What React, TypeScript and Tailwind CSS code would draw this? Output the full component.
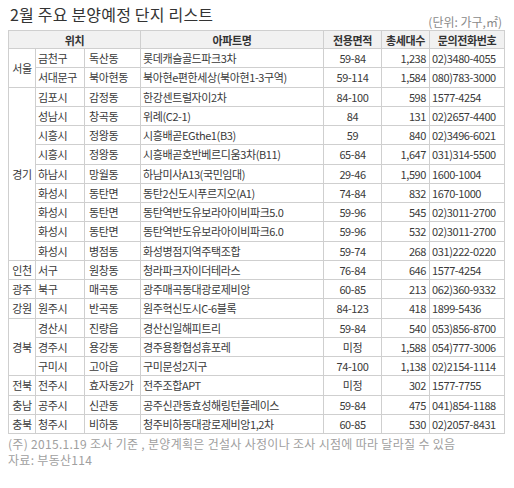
const font = { fontFamily: '"Noto Sans CJK KR", "Noto Sans", sans-serif' };

type Row = {
  region?: string;
  span?: number;
  city: string;
  dong: string;
  name: string;
  area: string;
  units: string;
  phone: string;
};

const rows: Row[] = [
  { region: "서울", span: 2, city: "금천구", dong: "독산동", name: "롯데캐슬골드파크3차", area: "59-84", units: "1,238", phone: "02)3480-4055" },
  { city: "서대문구", dong: "북아현동", name: "북아현e편한세상(북아현1-3구역)", area: "59-114", units: "1,584", phone: "080)783-3000" },
  { region: "경기", span: 9, city: "김포시", dong: "감정동", name: "한강센트럴자이2차", area: "84-100", units: "598", phone: "1577-4254" },
  { city: "성남시", dong: "창곡동", name: "위례(C2-1)", area: "84", units: "131", phone: "02)2657-4400" },
  { city: "시흥시", dong: "정왕동", name: "시흥배곧EGthe1(B3)", area: "59", units: "840", phone: "02)3496-6021" },
  { city: "시흥시", dong: "정왕동", name: "시흥배곧호반베르디움3차(B11)", area: "65-84", units: "1,647", phone: "031)314-5500" },
  { city: "하남시", dong: "망월동", name: "하남미사A13(국민임대)", area: "29-46", units: "1,590", phone: "1600-1004" },
  { city: "화성시", dong: "동탄면", name: "동탄2신도시푸르지오(A1)", area: "74-84", units: "832", phone: "1670-1000" },
  { city: "화성시", dong: "동탄면", name: "동탄역반도유보라아이비파크5.0", area: "59-96", units: "545", phone: "02)3011-2700" },
  { city: "화성시", dong: "동탄면", name: "동탄역반도유보라아이비파크6.0", area: "59-96", units: "532", phone: "02)3011-2700" },
  { city: "화성시", dong: "병점동", name: "화성병점지역주택조합", area: "59-74", units: "268", phone: "031)222-0220" },
  { region: "인천", span: 1, city: "서구", dong: "원창동", name: "청라파크자이더테라스", area: "76-84", units: "646", phone: "1577-4254" },
  { region: "광주", span: 1, city: "북구", dong: "매곡동", name: "광주매곡동대광로제비앙", area: "60-85", units: "213", phone: "062)360-9332" },
  { region: "강원", span: 1, city: "원주시", dong: "반곡동", name: "원주혁신도시C-6블록", area: "84-123", units: "418", phone: "1899-5436" },
  { region: "경북", span: 3, city: "경산시", dong: "진량읍", name: "경산신일해피트리", area: "59-84", units: "540", phone: "053)856-8700" },
  { city: "경주시", dong: "용강동", name: "경주용황협성휴포레", area: "미정", units: "1,588", phone: "054)777-3006" },
  { city: "구미시", dong: "고아읍", name: "구미문성2지구", area: "74-100", units: "1,138", phone: "02)2154-1114" },
  { region: "전북", span: 1, city: "전주시", dong: "효자동2가", name: "전주조합APT", area: "미정", units: "302", phone: "1577-7755" },
  { region: "충남", span: 1, city: "공주시", dong: "신관동", name: "공주신관동효성해링턴플레이스", area: "59-84", units: "475", phone: "041)854-1188" },
  { region: "충북", span: 1, city: "청주시", dong: "비하동", name: "청주비하동대광로제비앙1,2차", area: "60-85", units: "530", phone: "02)2057-8431" },
];

const td = "border border-[#cfcfcf] p-0 whitespace-nowrap overflow-hidden";

export default function App() {
  return (
    <div
      className="w-[514px] h-[488px] bg-white px-[8px] text-[#3a3a3a]"
      style={font}
    >
      <div className="h-[30px] flex justify-between">
        <div className="text-[16px] leading-[20px] mt-[4px] pl-[2px] text-[#333] tracking-[0.2px]">
          2월 주요 분양예정 단지 리스트
        </div>
        <div className="self-end text-[12px] leading-[15px] mb-[1px] mr-[4px] text-[#8a8a8a]">
          (단위: 가구,㎡)
        </div>
      </div>
      <table className="table-fixed border-collapse w-[496px] text-[11px] leading-[14px] tracking-[-0.4px]">
        <colgroup>
          <col className="w-[27px]" />
          <col className="w-[49px]" />
          <col className="w-[56px]" />
          <col className="w-[183px]" />
          <col className="w-[58px]" />
          <col className="w-[48px]" />
          <col className="w-[75px]" />
        </colgroup>
        <thead>
          <tr className="h-[18px] bg-[#f1f1f1] font-bold text-[#333]">
            <th colSpan={3} className={td + " text-center"}>위치</th>
            <th className={td + " text-center"}>아파트명</th>
            <th className={td + " text-center"}>전용면적</th>
            <th className={td + " text-center"}>총세대수</th>
            <th className={td + " text-center"}>문의전화번호</th>
          </tr>
        </thead>
        <tbody>
          {rows.map((r, i) => (
            <tr key={i} className="h-[19.25px]">
              {r.region && (
                <td rowSpan={r.span} className={td + " text-center"}>
                  {r.region}
                </td>
              )}
              <td className={td + " pl-[2px]"}>{r.city}</td>
              <td className={td + " pl-[4px]"}>{r.dong}</td>
              <td className={td + " pl-[2px]"}>{r.name}</td>
              <td className={td + " text-center"}>{r.area}</td>
              <td className={td + " text-right pr-[3px]"}>{r.units}</td>
              <td className={td + " pl-[2px]"}>{r.phone}</td>
            </tr>
          ))}
        </tbody>
      </table>
      <div className="mt-[2px] text-[12px] leading-[16px] tracking-[0.3px] text-[#a0a0a0]">
        <div>(주) 2015.1.19 조사 기준 , 분양계획은 건설사 사정이나 조사 시점에 따라 달라질 수 있음</div>
        <div>자료: 부동산114</div>
      </div>
    </div>
  );
}
